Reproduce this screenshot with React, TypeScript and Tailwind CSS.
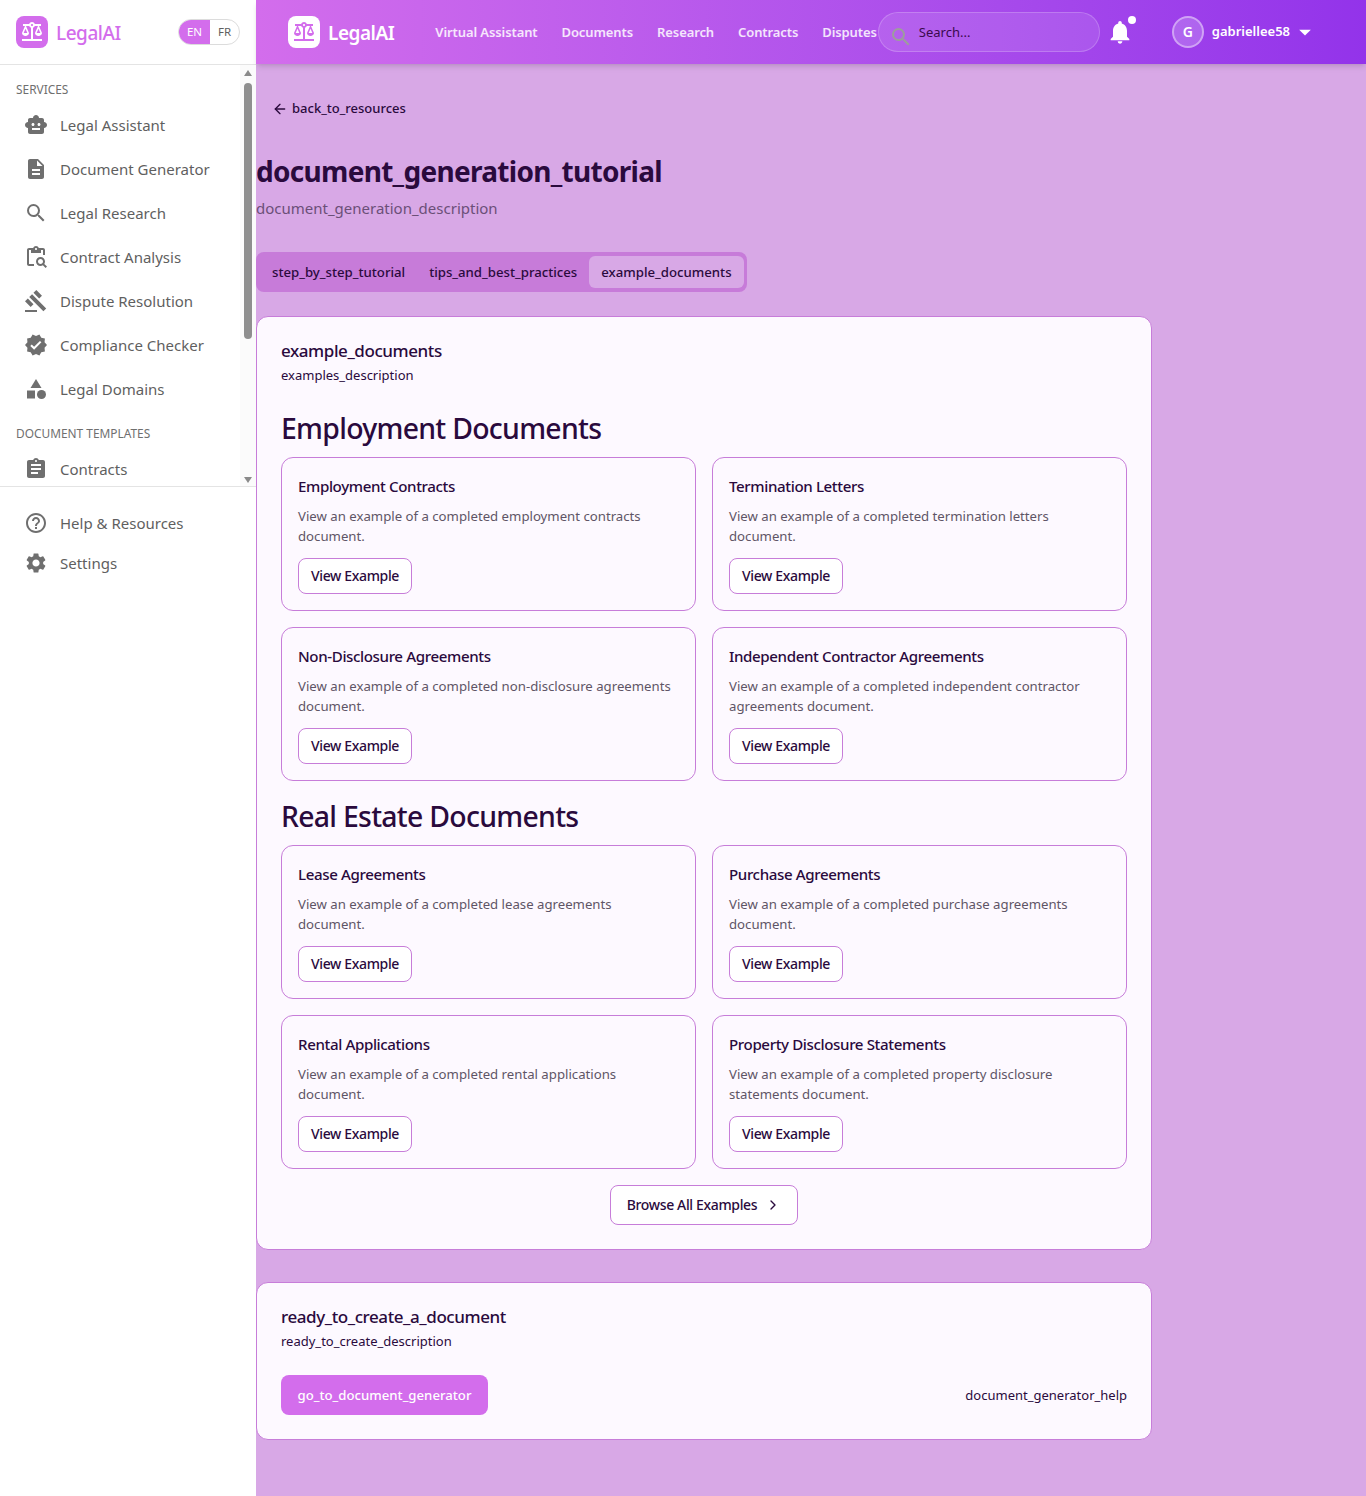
import { ChevronRight, ArrowLeft } from "lucide-react";
import {
  MdSmartToy,
  MdDescription,
  MdSearch,
  MdOutlineContentPasteSearch,
  MdGavel,
  MdVerified,
  MdCategory,
  MdAssignment,
  MdHelpOutline,
  MdSettings,
  MdNotifications,
  MdBalance,
  MdArrowDropDown,
} from "react-icons/md";

const SERVICES = [
  { label: "Legal Assistant", icon: MdSmartToy },
  { label: "Document Generator", icon: MdDescription },
  { label: "Legal Research", icon: MdSearch },
  { label: "Contract Analysis", icon: MdOutlineContentPasteSearch },
  { label: "Dispute Resolution", icon: MdGavel },
  { label: "Compliance Checker", icon: MdVerified },
  { label: "Legal Domains", icon: MdCategory },
];

const NAV_LINKS = ["Virtual Assistant", "Documents", "Research", "Contracts", "Disputes"];

const SECTIONS = [
  {
    title: "Employment Documents",
    items: [
      { title: "Employment Contracts", body: "View an example of a completed employment contracts document." },
      { title: "Termination Letters", body: "View an example of a completed termination letters document." },
      { title: "Non-Disclosure Agreements", body: "View an example of a completed non-disclosure agreements document." },
      { title: "Independent Contractor Agreements", body: "View an example of a completed independent contractor agreements document." },
    ],
  },
  {
    title: "Real Estate Documents",
    items: [
      { title: "Lease Agreements", body: "View an example of a completed lease agreements document." },
      { title: "Purchase Agreements", body: "View an example of a completed purchase agreements document." },
      { title: "Rental Applications", body: "View an example of a completed rental applications document." },
      { title: "Property Disclosure Statements", body: "View an example of a completed property disclosure statements document." },
    ],
  },
];

function SideItem({ label, icon: Icon }: { label: string; icon: typeof MdSearch }) {
  return (
    <div className="flex h-11 items-center pl-6 text-[#5f5f5f]">
      <Icon size={24} className="shrink-0 text-[#6f6f6f]" />
      <span className="ml-[12px] text-[15px]">{label}</span>
    </div>
  );
}

function Sidebar() {
  return (
    <aside className="flex w-64 shrink-0 flex-col bg-white">
      <div className="flex h-[65px] items-center border-b border-[#e4e4e4] pl-4 pr-4">
        <div className="flex h-8 w-8 items-center justify-center rounded-lg bg-[#d36dec] text-white">
          <MdBalance size={24} />
        </div>
        <span className="ml-2 mt-[2px] text-[19px] font-medium tracking-tight text-[#d36dec]">LegalAI</span>
        <div className="ml-auto flex h-[26px] w-[62px] overflow-hidden rounded-full border border-[#dcdcdc] text-[11.5px]">
          <span className="flex w-[31px] items-center justify-center bg-[#d36dec] text-white">EN</span>
          <span className="flex flex-1 items-center justify-center text-[#5f5f5f]">FR</span>
        </div>
      </div>

      <div className="relative h-[422px] overflow-hidden border-b border-[#e4e4e4]">
        <p className="ml-4 mt-[12px] text-[11.9px] uppercase leading-[24px] text-[#6f6f6f]">Services</p>
        <div className="mt-[2px]">
          {SERVICES.map((item) => (
            <SideItem key={item.label} {...item} />
          ))}
        </div>
        <p className="ml-4 mt-[10px] text-[11.9px] uppercase leading-[24px] text-[#6f6f6f]">Document Templates</p>
        <div className="mt-[2px]">
          <SideItem label="Contracts" icon={MdAssignment} />
        </div>

        {/* scrollbar */}
        <div className="absolute inset-y-0 right-0 w-4 bg-[#fbfbfb]">
          <div className="absolute left-[4px] top-[5px] h-0 w-0 border-x-[4px] border-b-[6px] border-x-transparent border-b-[#8a8a8a]" />
          <div className="absolute left-[4px] top-[18px] h-[256px] w-[8px] rounded-full bg-[#8f8f8f]" />
          <div className="absolute bottom-[3px] left-[4px] h-0 w-0 border-x-[4px] border-t-[6px] border-x-transparent border-t-[#8a8a8a]" />
        </div>
      </div>

      <div className="pt-[14px]">
        <SideItem label="Help & Resources" icon={MdHelpOutline} />
        <div className="-mt-1">
          <SideItem label="Settings" icon={MdSettings} />
        </div>
      </div>
    </aside>
  );
}

function TopBar() {
  return (
    <header className="flex h-16 items-center bg-gradient-to-r from-[#d36dec] to-[#9333ea] pl-8 text-white shadow-md">
      <div className="flex h-8 w-8 items-center justify-center rounded-lg bg-white text-[#d36dec]">
        <MdBalance size={24} />
      </div>
      <span className="ml-2 mt-[2px] text-[19px] font-semibold tracking-tight">LegalAI</span>
      <nav className="ml-[41px] flex gap-6 pt-[1px] text-[13px] font-semibold tracking-[-0.1px] text-white/85">
        {NAV_LINKS.map((link) => (
          <span key={link}>{link}</span>
        ))}
      </nav>
      <div className="ml-[1px] flex h-10 w-[222px] items-center rounded-full border border-white/20 bg-white/10 pl-[10px] text-[13px] text-[#3a0a4d]">
        <MdSearch size={24} className="translate-y-[5px] text-[#9d9d9d]" />
        <span className="ml-[6px] pt-[2px]">Search...</span>
      </div>
      <div className="relative ml-[4px] flex h-8 w-8 items-center justify-center">
        <MdNotifications size={28} />
        <span className="absolute right-0 top-0 h-2 w-2 rounded-full bg-white" />
      </div>
      <div className="ml-[36px] flex h-8 w-8 items-center justify-center rounded-full border-2 border-white/40 bg-white/20 text-sm font-semibold">G</div>
      <span className="ml-2 text-[13px] font-semibold">gabriellee58</span>
      <MdArrowDropDown size={28} className="ml-[1px]" />
    </header>
  );
}

function ExampleCard({ title, body }: { title: string; body: string }) {
  return (
    <div className="flex h-[154px] flex-col rounded-xl border border-[#c77dd9] bg-[#fdf9ff] px-4 pt-4">
      <h4 className="text-[15.1px] font-medium leading-6 tracking-tight text-[#2a0a3d]">{title}</h4>
      <p className="mt-[8px] text-[13.2px] leading-5 text-[#5f5566]">{body}</p>
      <button className="mt-3 h-9 w-[114px] rounded-lg border border-[#c77dd9] bg-white text-sm font-medium tracking-tight text-[#2a0a3d]">
        View Example
      </button>
    </div>
  );
}

export default function App() {
  return (
    <div className="flex min-h-[1496px] w-full bg-[#d8a8e6] font-['Noto_Sans',sans-serif] text-[#2a0a3d]">
      <Sidebar />
      <div className="min-w-0 flex-1">
        <TopBar />
        <main className="w-[896px] pb-14">
          <div className="ml-4 mt-[35px] flex h-5 items-center text-[13px] font-medium">
            <ArrowLeft size={16} strokeWidth={2} className="mr-[4px]" />
            back_to_resources
          </div>

          <h1 className="mt-[34px] text-[28px] font-bold leading-9 tracking-tight text-[#2a0a3d]">document_generation_tutorial</h1>
          <p className="mt-[7px] text-[15px] leading-6 text-[#6b4f78]">document_generation_description</p>

          <div className="mt-[32px] flex h-10 w-[491px] items-center rounded-lg bg-[#c77bd9] p-1 text-[13.2px] font-medium">
            <span className="px-3 pt-[1px]">step_by_step_tutorial</span>
            <span className="px-3 pt-[1px]">tips_and_best_practices</span>
            <span className="flex h-8 items-center rounded-md bg-[#d8a8e6] px-3 pt-[1px]">example_documents</span>
          </div>

          <section className="mt-[24px] rounded-xl border border-[#c77dd9] bg-[#fdf9ff] p-6">
            <h3 className="text-[17px] font-medium leading-[20px] tracking-tight">example_documents</h3>
            <p className="mt-[4px] text-[13px] leading-5">examples_description</p>

            {SECTIONS.map((section, i) => (
              <div key={section.title} className={i === 0 ? "mt-[25px]" : "mt-[17px]"}>
                <h2 className="text-[28.4px] font-medium leading-9 tracking-tight">{section.title}</h2>
                <div className="mt-[11px] grid grid-cols-2 gap-4">
                  {section.items.map((item) => (
                    <ExampleCard key={item.title} {...item} />
                  ))}
                </div>
              </div>
            ))}

            <div className="mt-4 flex justify-center">
              <button className="flex h-10 w-[188px] items-center justify-center gap-2 rounded-lg border border-[#c77dd9] bg-white text-sm font-medium tracking-tight">
                Browse All Examples
                <ChevronRight size={16} />
              </button>
            </div>
          </section>

          <section className="mt-[32px] rounded-xl border border-[#c77dd9] bg-[#fdf9ff] p-6">
            <h3 className="text-[17px] font-medium leading-[20px] tracking-tight">ready_to_create_a_document</h3>
            <p className="mt-[4px] text-[13px] leading-5">ready_to_create_description</p>
            <div className="mt-6 flex items-center justify-between">
              <button className="h-10 w-[207px] rounded-lg bg-[#d36dec] pt-[1px] text-[13.2px] font-medium text-white">go_to_document_generator</button>
              <span className="pt-[1px] text-[13px]">document_generator_help</span>
            </div>
          </section>
        </main>
      </div>
    </div>
  );
}
